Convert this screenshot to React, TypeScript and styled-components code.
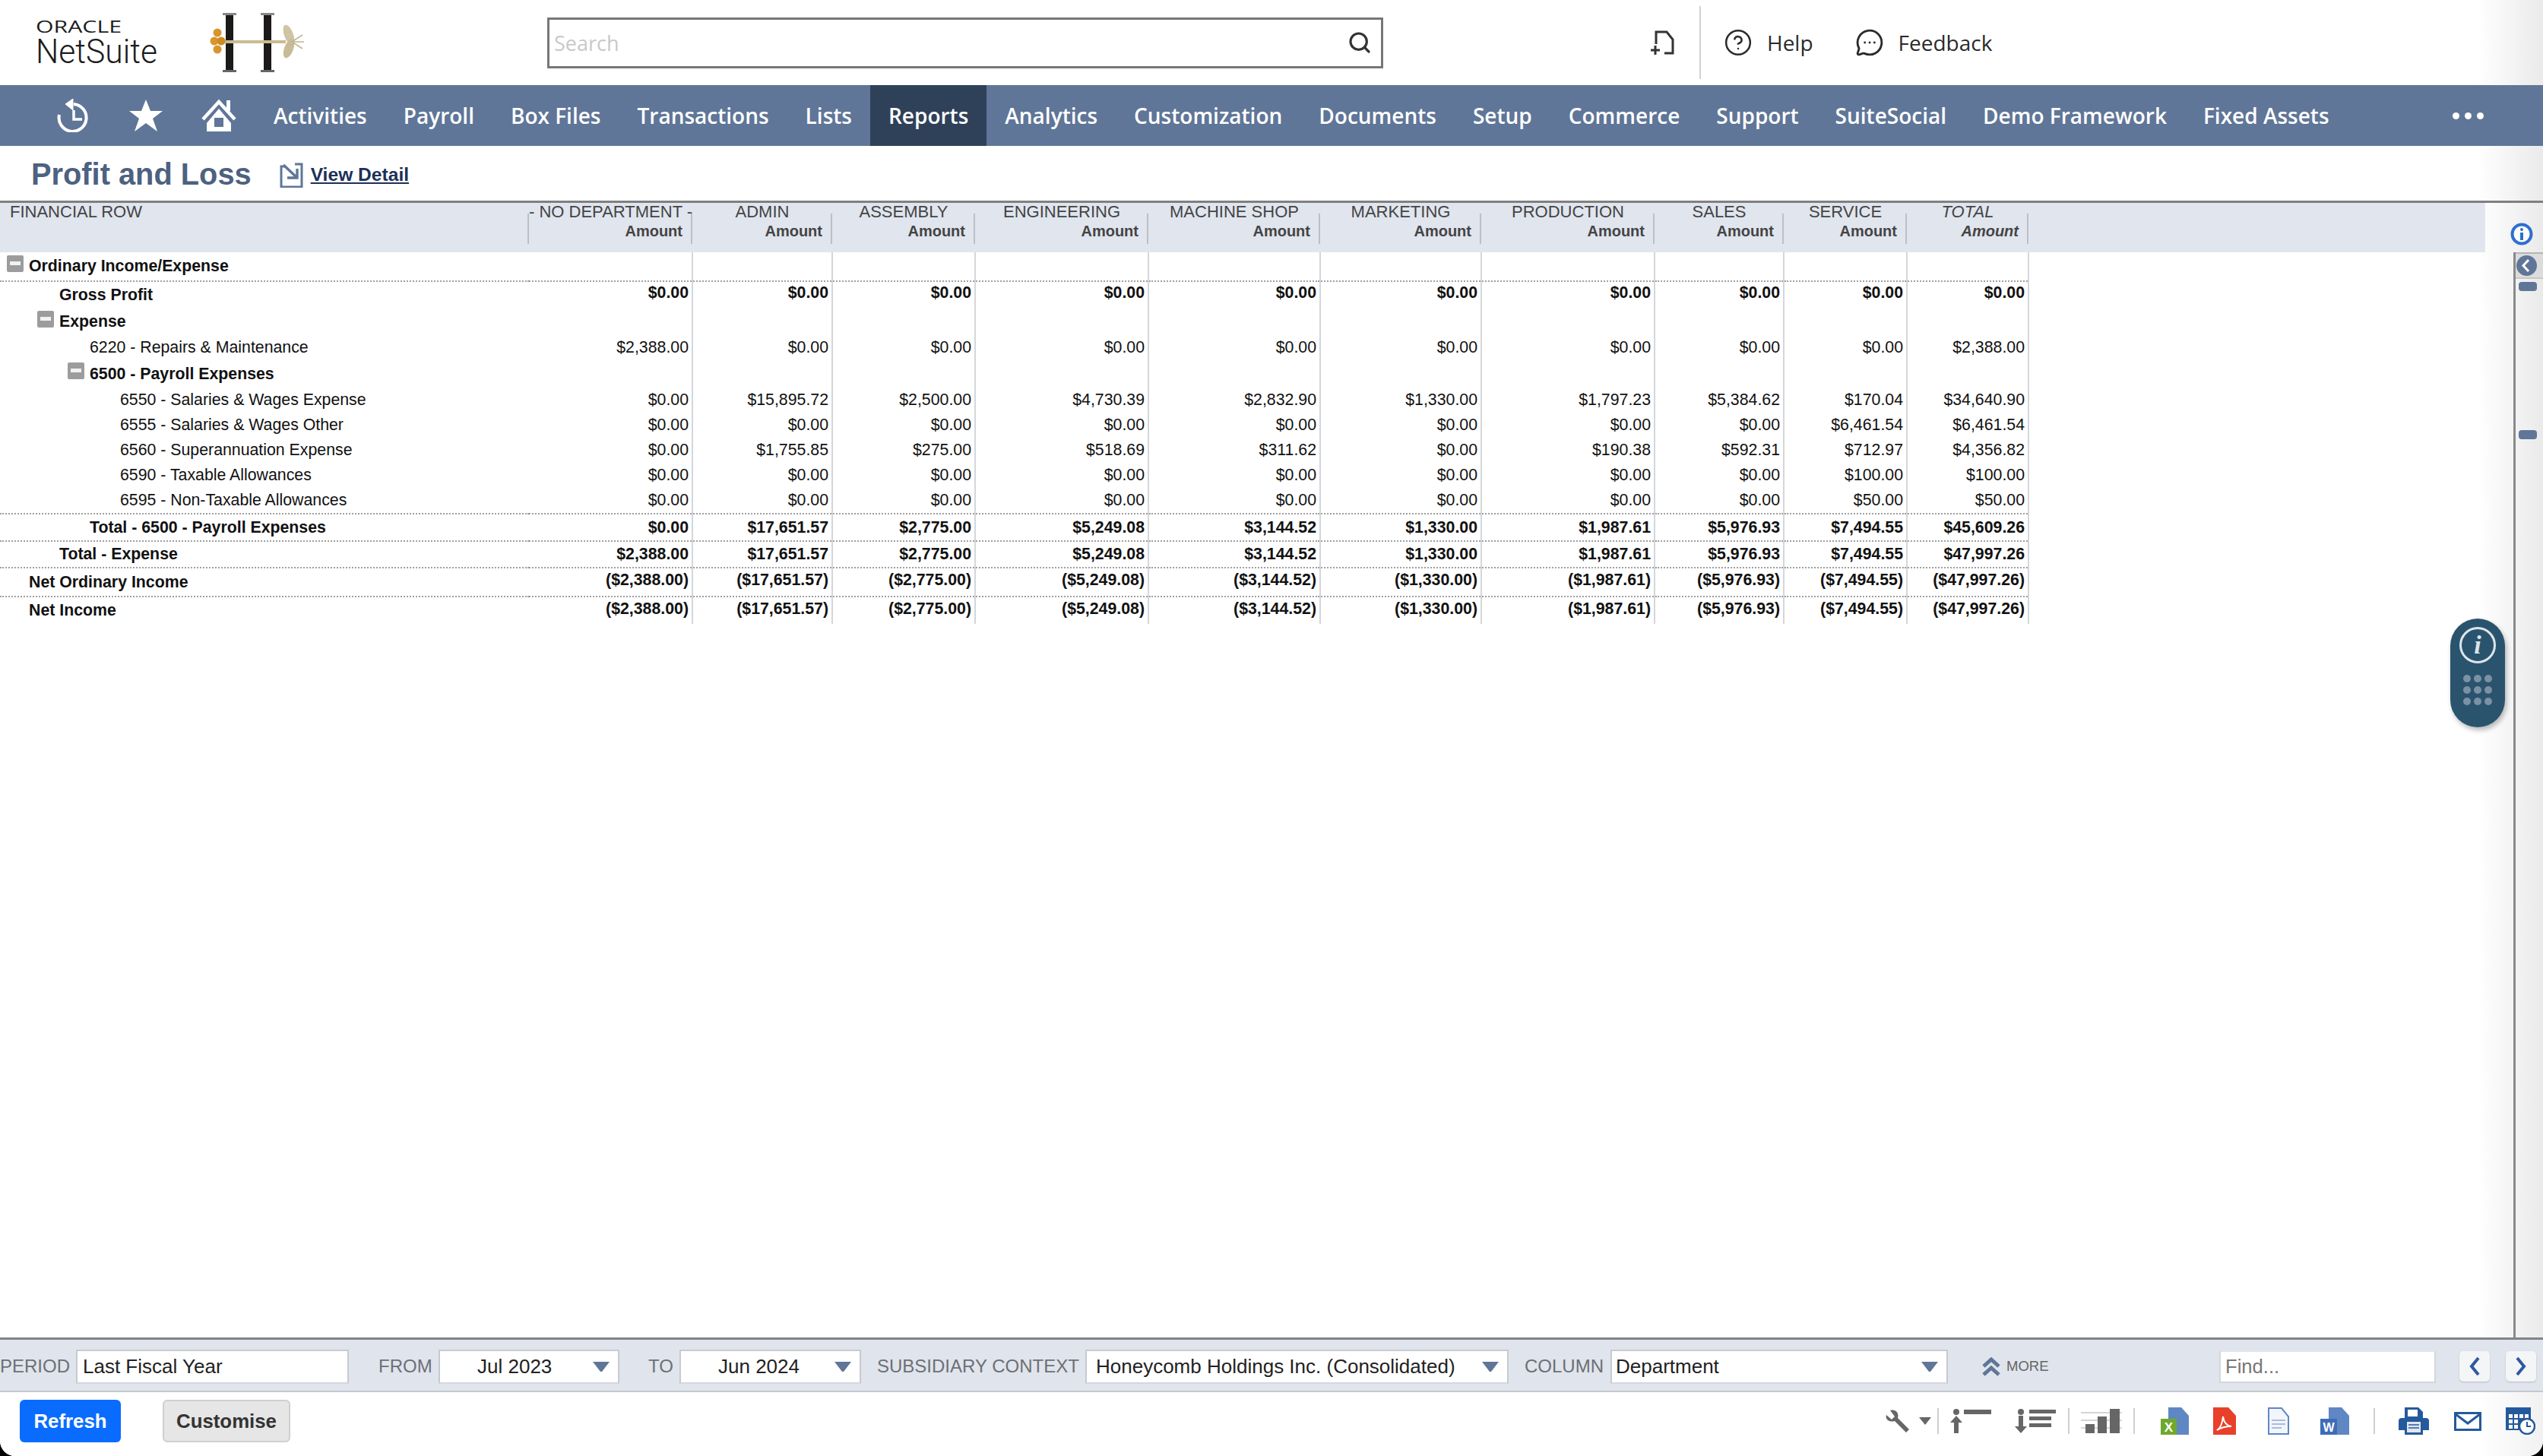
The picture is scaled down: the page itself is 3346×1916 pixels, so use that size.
import styled, { createGlobalStyle, css } from 'styled-components'
import { CircleHelp, MessageCircleMore, Search } from 'lucide-react'

const COLS = [696, 215, 184, 188, 228, 226, 212, 228, 170, 162, 160, 601]
const DEPTS = ['- NO DEPARTMENT -', 'ADMIN', 'ASSEMBLY', 'ENGINEERING', 'MACHINE SHOP', 'MARKETING', 'PRODUCTION', 'SALES', 'SERVICE', 'TOTAL']
const NAV = ['Activities', 'Payroll', 'Box Files', 'Transactions', 'Lists', 'Reports', 'Analytics', 'Customization', 'Documents', 'Setup', 'Commerce', 'Support', 'SuiteSocial', 'Demo Framework', 'Fixed Assets']

const Z = '$0.00'
const EMPTY = ['', '', '', '', '', '', '', '', '', '']

interface IRow {
  label: string
  level: number
  height: number
  bold?: boolean
  toggle?: boolean
  line?: boolean
  lift?: number
  values: string[]
}

const totals = ['$17,651.57', '$2,775.00', '$5,249.08', '$3,144.52', '$1,330.00', '$1,987.61', '$5,976.93', '$7,494.55']
const negatives = ['($2,388.00)', '($17,651.57)', '($2,775.00)', '($5,249.08)', '($3,144.52)', '($1,330.00)', '($1,987.61)', '($5,976.93)', '($7,494.55)', '($47,997.26)']

const ROWS: IRow[] = [
  { label: 'Ordinary Income/Expense', level: 0, height: 38, bold: true, toggle: true, line: true, values: EMPTY },
  { label: 'Gross Profit', level: 1, height: 36, bold: true, lift: 7, values: [Z, Z, Z, Z, Z, Z, Z, Z, Z, Z] },
  { label: 'Expense', level: 1, height: 35, bold: true, toggle: true, values: EMPTY },
  { label: '6220 - Repairs & Maintenance', level: 2, height: 33, values: ['$2,388.00', Z, Z, Z, Z, Z, Z, Z, Z, '$2,388.00'] },
  { label: '6500 - Payroll Expenses', level: 2, height: 36, bold: true, toggle: true, values: EMPTY },
  { label: '6550 - Salaries & Wages Expense', level: 3, height: 33, values: [Z, '$15,895.72', '$2,500.00', '$4,730.39', '$2,832.90', '$1,330.00', '$1,797.23', '$5,384.62', '$170.04', '$34,640.90'] },
  { label: '6555 - Salaries & Wages Other', level: 3, height: 33, values: [Z, Z, Z, Z, Z, Z, Z, Z, '$6,461.54', '$6,461.54'] },
  { label: '6560 - Superannuation Expense', level: 3, height: 33, values: [Z, '$1,755.85', '$275.00', '$518.69', '$311.62', Z, '$190.38', '$592.31', '$712.97', '$4,356.82'] },
  { label: '6590 - Taxable Allowances', level: 3, height: 33, values: [Z, Z, Z, Z, Z, Z, Z, Z, '$100.00', '$100.00'] },
  { label: '6595 - Non-Taxable Allowances', level: 3, height: 34, line: true, values: [Z, Z, Z, Z, Z, Z, Z, Z, '$50.00', '$50.00'] },
  { label: 'Total - 6500 - Payroll Expenses', level: 2, height: 36, bold: true, line: true, values: [Z, ...totals, '$45,609.26'] },
  { label: 'Total - Expense', level: 1, height: 35, bold: true, line: true, values: ['$2,388.00', ...totals, '$47,997.26'] },
  { label: 'Net Ordinary Income', level: 0, height: 38, bold: true, line: true, lift: 5, values: negatives },
  { label: 'Net Income', level: 0, height: 36, bold: true, lift: 5, values: negatives },
]

const GlobalStyle = createGlobalStyle`
  html, body {
    margin: 0;
    padding: 0;
    background: #000;
  }
  * {
    box-sizing: border-box;
  }
`

const fade = css`
  background: linear-gradient(90deg, #fff 0, #fff calc(100% - 86px), #eaeaea 100%);
`

const Page = styled.div`
  position: relative;
  display: flex;
  flex-direction: column;
  width: 3346px;
  height: 1916px;
  overflow: hidden;
  background: #fff;
  border-radius: 0 0 20px 20px;
  font-family: 'Liberation Sans', Arial, sans-serif;
  color: #111;
`

const TopBar = styled.header`
  ${fade}
  display: flex;
  align-items: center;
  flex: 0 0 112px;
  padding-left: 47px;
`

const Logo = styled.svg`
  width: 170px;
  height: 84px;
  flex: none;
`

const Brand = styled.svg`
  width: 126px;
  height: 78px;
  margin-left: 57px;
  flex: none;
`

const SearchBox = styled.div`
  display: flex;
  align-items: center;
  justify-content: space-between;
  width: 1100px;
  height: 67px;
  margin-left: 320px;
  padding: 0 12px 0 6px;
  border: 3px solid #777;
  color: #c9c9c9;
  font-family: 'Open Sans', sans-serif;
  font-size: 27px;
  svg {
    color: #333;
  }
`

const AddPage = styled.svg`
  width: 31px;
  height: 32px;
  margin-left: 352px;
  flex: none;
`

const Divider = styled.div`
  width: 2px;
  height: 96px;
  margin: 0 30px 0 33px;
  background: #d2d2d2;
`

const HeadLink = styled.div<{ $gap: number }>`
  display: flex;
  align-items: center;
  gap: 19px;
  margin-right: ${(p) => p.$gap}px;
  font-family: 'Open Sans', sans-serif;
  font-size: 28px;
  font-weight: 500;
  color: #2b2b2b;
`

const Nav = styled.nav`
  display: flex;
  align-items: stretch;
  flex: 0 0 80px;
  padding-left: 48px;
  background: #5f7698;
`

const NavIcon = styled.div`
  display: flex;
  align-items: center;
  justify-content: center;
  width: 96px;
`

const NavItem = styled.a<{ $active?: boolean }>`
  display: flex;
  align-items: center;
  padding: 0 24px;
  font-family: 'Open Sans', sans-serif;
  font-size: 28px;
  font-weight: 600;
  color: #fff;
  white-space: nowrap;
  ${(p) => p.$active && 'background: #2f4159;'}
`

const MoreDots = styled.div`
  display: flex;
  align-items: center;
  gap: 7px;
  margin: 0 78px 0 auto;
  span {
    width: 9px;
    height: 9px;
    border-radius: 50%;
    background: #fff;
  }
`

const TitleRow = styled.div`
  ${fade}
  display: flex;
  align-items: center;
  flex: 0 0 72px;
  padding-left: 41px;
`

const Title = styled.h1`
  margin: 2px 0 0;
  font-size: 39.8px;
  font-weight: 700;
  color: #4d6180;
`

const DetailIcon = styled.svg`
  width: 33px;
  height: 33px;
  margin: 4px 8px 0 37px;
`

const DetailLink = styled.a`
  margin-top: 4px;
  font-size: 24.6px;
  font-weight: 700;
  color: #1c3157;
  text-decoration: underline;
`

const Content = styled.main`
  ${fade}
  display: flex;
  flex: 1;
  min-height: 0;
  border-top: 3px solid #7f7f7f;
`

const TableArea = styled.div`
  width: 3270px;
  flex: none;
`

const Report = styled.table`
  width: 3270px;
  table-layout: fixed;
  border-collapse: collapse;
`

const HeadCell = styled.th<{ $italic?: boolean }>`
  position: relative;
  height: 65px;
  padding: 0;
  vertical-align: top;
  background: #e0e5ee;
  font-weight: 400;
  color: #444;
  ${(p) => p.$italic && 'font-style: italic;'}
  &::after {
    content: '';
    position: absolute;
    top: 14px;
    right: 0;
    width: 2px;
    height: 40px;
    background: #bcc0c6;
  }
`

const FirstHead = styled.th`
  position: relative;
  height: 65px;
  padding: 0 0 0 13px;
  vertical-align: top;
  text-align: left;
  background: #e0e5ee;
  font-weight: 400;
  font-size: 22px;
  line-height: 24px;
  color: #444;
  &::after {
    content: '';
    position: absolute;
    top: 14px;
    right: 0;
    width: 2px;
    height: 40px;
    background: #bcc0c6;
  }
`

const FillHead = styled.th`
  background: #e0e5ee;
`

const HeadTitle = styled.div`
  font-size: 22px;
  line-height: 24px;
  text-align: center;
  white-space: nowrap;
`

const HeadSub = styled.div`
  padding-right: 13px;
  font-size: 20px;
  line-height: 26px;
  font-weight: 700;
  text-align: right;
`

const RowLine = styled.tr<{ $line?: boolean }>`
  td {
    ${(p) => p.$line && 'border-bottom: 2px dotted #a0a0a0;'}
  }
`

const LabelCell = styled.td<{ $level: number; $bold?: boolean }>`
  padding: 0 0 0 ${(p) => 38 + p.$level * 40}px;
  font-size: 21.3px;
  font-weight: ${(p) => (p.$bold ? 700 : 400)};
  white-space: nowrap;
`

const LabelInner = styled.div`
  display: flex;
  align-items: center;
`

const Toggle = styled.span`
  position: relative;
  flex: none;
  width: 22px;
  height: 22px;
  margin: 0 7px 8px -29px;
  border-radius: 2px;
  background: #9c9c9c;
  &::after {
    content: '';
    position: absolute;
    left: 4px;
    top: 8px;
    width: 14px;
    height: 5px;
    background: #f2f2f2;
  }
`

const ValueCell = styled.td<{ $bold?: boolean; $lift?: number }>`
  padding: 0 4px ${(p) => p.$lift ?? 0}px 0;
  border-right: 2px solid #d4d6da;
  font-size: 21.3px;
  font-weight: ${(p) => (p.$bold ? 700 : 400)};
  text-align: right;
  white-space: nowrap;
`

const PlainCell = styled.td`
  && {
    border: 0;
  }
`

const Side = styled.aside`
  position: relative;
  display: flex;
  flex-direction: column;
  align-items: flex-end;
  flex: 1;
  padding-top: 26px;
`

const InfoMark = styled.svg`
  width: 30px;
  height: 30px;
  margin-right: 13px;
`

const Rail = styled.div`
  flex: 1;
  width: 39px;
  margin-top: 9px;
  border-left: 3px solid #8a8a8a;
`

const RailBack = styled.div`
  display: flex;
  align-items: center;
  padding-left: 1px;
  height: 35px;
  background: #dcdcdc;
  border-top: 2px solid #b5b5b5;
  border-bottom: 2px solid #c8c8c8;
`

const RailPill = styled.div<{ $top: number }>`
  width: 24px;
  height: 12px;
  margin: ${(p) => p.$top}px 0 0 4px;
  border-radius: 4px;
  background: #5f7698;
`

const Widget = styled.div`
  position: absolute;
  left: 3224px;
  top: 814px;
  display: flex;
  flex-direction: column;
  align-items: center;
  width: 72px;
  height: 143px;
  padding-top: 11px;
  border-radius: 36px;
  background: #2a546e;
  box-shadow: 2px 4px 6px rgba(0, 0, 0, 0.28);
`

const WidgetRing = styled.div`
  display: flex;
  align-items: center;
  justify-content: center;
  width: 48px;
  height: 48px;
  border: 3px solid #dde6ea;
  border-radius: 50%;
  color: #dde6ea;
  font-family: 'Liberation Serif', serif;
  font-style: italic;
  font-weight: 700;
  font-size: 34px;
`

const WidgetDots = styled.div`
  display: grid;
  grid-template-columns: repeat(3, 10px);
  gap: 5px 4px;
  margin-top: 15px;
  span {
    width: 10px;
    height: 10px;
    border-radius: 50%;
    background: #7c91a4;
  }
`

const FilterBar = styled.div`
  display: flex;
  align-items: center;
  flex: 0 0 72px;
  border-top: 3px solid #808488;
  border-bottom: 2px solid #c5c8cc;
  background: #e0e4ec;
  font-size: 24px;
  padding-top: 3px;
`

const FilterLabel = styled.span<{ $w: number; $ml: number }>`
  flex: none;
  width: ${(p) => p.$w}px;
  margin: 0 9px 0 ${(p) => p.$ml}px;
  color: #6c7076;
  white-space: nowrap;
`

const Field = styled.div<{ $w: number; $pl: number }>`
  display: flex;
  align-items: center;
  justify-content: space-between;
  flex: none;
  width: ${(p) => p.$w}px;
  height: 45px;
  padding: 0 10px 0 ${(p) => p.$pl}px;
  background: #fff;
  border: 2px solid #c7cad0;
  border-bottom-color: #d4d7dc;
  font-size: 26px;
  color: #222;
  white-space: nowrap;
`

const Caret = styled.svg`
  width: 24px;
  height: 15px;
  flex: none;
`

const MoreToggle = styled.div`
  display: flex;
  align-items: center;
  gap: 8px;
  width: 88px;
  margin-left: 45px;
  font-size: 18.5px;
  color: #666;
`

const FindBox = styled.div`
  display: flex;
  align-items: center;
  width: 285px;
  height: 43px;
  margin-left: 224px;
  padding-left: 6px;
  background: #fff;
  border: 2px solid #d4d6da;
  border-top-color: #e0e4ec;
  font-size: 25.6px;
  color: #777;
`

const PageBtn = styled.div<{ $ml: number }>`
  display: flex;
  align-items: center;
  justify-content: center;
  width: 40px;
  height: 40px;
  margin-left: ${(p) => p.$ml}px;
  border-radius: 5px;
  background: #f4f5f7;
  box-shadow: 0 1px 2px rgba(0, 0, 0, 0.18);
`

const ActionBar = styled.footer`
  display: flex;
  align-items: center;
  flex: 0 0 84px;
  padding: 0 0 8px 26px;
  background: linear-gradient(90deg, #fff 0, #fff calc(100% - 86px), #f1f1f1 100%);
`

const Button = styled.button<{ $primary?: boolean }>`
  height: 56px;
  padding: 0;
  border-radius: 6px;
  font-family: 'Liberation Sans', Arial, sans-serif;
  font-size: 25.8px;
  font-weight: 700;
  ${(p) =>
    p.$primary
      ? 'width: 133px; color: #fff; background: #0a6cff; border: 0;'
      : 'width: 168px; margin-left: 55px; color: #333; background: #e6e6e6; border: 2px solid #cfcfcf;'}
`

const Tools = styled.div`
  display: flex;
  align-items: center;
  margin-left: 2098px;
`

const Tool = styled.svg<{ $w: number; $h: number; $ml: number }>`
  flex: none;
  width: ${(p) => p.$w}px;
  height: ${(p) => p.$h}px;
  margin-left: ${(p) => p.$ml}px;
`

const ToolSep = styled.div<{ $ml: number }>`
  flex: none;
  width: 2px;
  height: 34px;
  margin-left: ${(p) => p.$ml}px;
  background: #cfcfcf;
`

const CaretIcon = () => (
  <Caret viewBox="0 0 24 15">
    <path d="M1 1h22L13 14h-2z" fill="#5f7698" />
  </Caret>
)

const Doc = ({ fill, stroke }: { fill: string; stroke?: string }) => (
  <path d="M8 1h17l9 11v23H8z" fill={fill} stroke={stroke} strokeWidth={stroke ? 2 : 0} />
)

const App = () => {
  return (
    <>
      <GlobalStyle />
      <Page>
        <TopBar>
          <Logo viewBox="0 -12 170 84">
            <text x="0" y="17" fontFamily="'Open Sans', sans-serif" fontSize="21" fill="#1c1c1c" textLength="113" lengthAdjust="spacingAndGlyphs">ORACLE</text>
            <text x="0" y="57" fontFamily="Roboto, sans-serif" fontWeight="300" fontSize="44" fill="#1c1c1c" textLength="160" lengthAdjust="spacingAndGlyphs">NetSuite</text>
          </Logo>
          <Brand viewBox="0 0 126 78">
            <rect x="23" y="0" width="10" height="78" fill="#1c1a18" />
            <rect x="73" y="0" width="10" height="78" fill="#1c1a18" />
            <rect x="19" y="0" width="18" height="3" fill="#888" />
            <rect x="69" y="0" width="18" height="3" fill="#888" />
            <rect x="19" y="75" width="18" height="3" fill="#666" />
            <rect x="69" y="75" width="18" height="3" fill="#666" />
            <rect x="18" y="36" width="84" height="4" fill="#c9bb8f" />
            <circle cx="12" cy="26" r="5.5" fill="#d9952c" />
            <circle cx="8" cy="37" r="5.5" fill="#d9952c" />
            <circle cx="17" cy="37" r="5.5" fill="#cf8a22" />
            <circle cx="12" cy="48" r="5.5" fill="#d9952c" />
            <ellipse cx="106" cy="29" rx="6" ry="14" fill="#cfc5a4" transform="rotate(-20 106 29)" />
            <ellipse cx="106" cy="47" rx="6" ry="13" fill="#c8bc98" transform="rotate(20 106 47)" />
            <path d="M110 38l14-9M110 38l16 0M110 38l14 9" stroke="#c2b591" strokeWidth="1.5" />
          </Brand>
          <SearchBox>
            Search
            <Search size={32} strokeWidth={2.4} />
          </SearchBox>
          <AddPage viewBox="0 0 31 32" fill="none" stroke="#333" strokeWidth="3">
            <path d="M7 18V2h14l8 10v18H18" />
            <path d="M6 20v12M0 26h12" />
          </AddPage>
          <Divider />
          <HeadLink $gap={55}>
            <CircleHelp size={38} strokeWidth={1.6} />
            Help
          </HeadLink>
          <HeadLink $gap={0}>
            <MessageCircleMore size={38} strokeWidth={1.8} />
            Feedback
          </HeadLink>
        </TopBar>
        <Nav>
          <NavIcon>
            <svg width="42" height="44" viewBox="0 0 42 44" fill="none" stroke="#fff" strokeWidth="4">
              <path d="M22 7a18 18 0 1 1-19 14" />
              <path d="M21 0v15L11 7z" fill="#fff" strokeWidth="1" />
              <path d="M22 15v12h11" strokeWidth="3.5" />
            </svg>
          </NavIcon>
          <NavIcon>
            <svg width="44" height="42" viewBox="0 0 44 42">
              <path d="M22 0l6 15h16L31 25l6 17-15-11-15 11 6-17L0 15h16z" fill="#fff" />
            </svg>
          </NavIcon>
          <NavIcon>
            <svg width="46" height="42" viewBox="0 0 46 42">
              <path d="M2 26L23 3l21 23" fill="none" stroke="#fff" strokeWidth="4.5" />
              <rect x="33" y="1" width="5" height="14" fill="#fff" />
              <path d="M7 31l16-19 16 19v11H7z" fill="#fff" />
              <rect x="17" y="24" width="12" height="12" fill="#5f7698" />
            </svg>
          </NavIcon>
          {NAV.map((item) => (
            <NavItem key={item} $active={item === 'Reports'}>
              {item}
            </NavItem>
          ))}
          <MoreDots>
            <span />
            <span />
            <span />
          </MoreDots>
        </Nav>
        <TitleRow>
          <Title>Profit and Loss</Title>
          <DetailIcon viewBox="0 0 33 33" fill="none" stroke="#5f7698" strokeWidth="3">
            <path d="M8 5H2v27h27V2h-9" />
            <path d="M5 3l18 17M23 8v12H10" strokeWidth="3.4" />
          </DetailIcon>
          <DetailLink>View Detail</DetailLink>
        </TitleRow>
        <Content>
          <TableArea>
            <Report>
              <colgroup>
                {COLS.map((w, i) => (
                  <col key={i} style={{ width: w }} />
                ))}
              </colgroup>
              <thead>
                <tr>
                  <FirstHead>FINANCIAL ROW</FirstHead>
                  {DEPTS.map((d) => (
                    <HeadCell key={d} $italic={d === 'TOTAL'}>
                      <HeadTitle>{d}</HeadTitle>
                      <HeadSub>Amount</HeadSub>
                    </HeadCell>
                  ))}
                  <FillHead />
                </tr>
              </thead>
              <tbody>
                {ROWS.map((row) => (
                  <RowLine key={row.label} $line={row.line} style={{ height: row.height }}>
                    <LabelCell $level={row.level} $bold={row.bold}>
                      <LabelInner>
                        {row.toggle && <Toggle />}
                        {row.label}
                      </LabelInner>
                    </LabelCell>
                    {row.values.map((v, i) => (
                      <ValueCell key={i} $bold={row.bold} $lift={row.lift}>
                        {v}
                      </ValueCell>
                    ))}
                    <PlainCell />
                  </RowLine>
                ))}
              </tbody>
            </Report>
          </TableArea>
          <Side>
            <InfoMark viewBox="0 0 30 30">
              <circle cx="15" cy="15" r="12.5" fill="#fff" stroke="#2f6fcf" strokeWidth="4" />
              <circle cx="15" cy="9" r="2" fill="#2f6fcf" />
              <rect x="13" y="13" width="4" height="10" fill="#2f6fcf" />
            </InfoMark>
            <Rail>
              <RailBack>
                <svg width="27" height="27" viewBox="0 0 27 27">
                  <circle cx="13.5" cy="13.5" r="13.5" fill="#5f7698" />
                  <path d="M16 6l-7 7.5 7 7.5" fill="none" stroke="#fff" strokeWidth="3" />
                </svg>
              </RailBack>
              <RailPill $top={4} />
              <RailPill $top={183} />
            </Rail>
          </Side>
        </Content>
        <FilterBar>
          <FilterLabel $w={91} $ml={0}>PERIOD</FilterLabel>
          <Field $w={359} $pl={7}>Last Fiscal Year</Field>
          <FilterLabel $w={70} $ml={39}>FROM</FilterLabel>
          <Field $w={238} $pl={49}>Jul 2023<CaretIcon /></Field>
          <FilterLabel $w={32} $ml={38}>TO</FilterLabel>
          <Field $w={239} $pl={49}>Jun 2024<CaretIcon /></Field>
          <FilterLabel $w={265} $ml={21}>SUBSIDIARY CONTEXT</FilterLabel>
          <Field $w={557} $pl={12}>Honeycomb Holdings Inc. (Consolidated)<CaretIcon /></Field>
          <FilterLabel $w={104} $ml={21}>COLUMN</FilterLabel>
          <Field $w={444} $pl={5}>Department<CaretIcon /></Field>
          <MoreToggle>
            <svg width="24" height="25" viewBox="0 0 24 25" fill="none" stroke="#5f7698" strokeWidth="5">
              <path d="M2 12L12 3l10 9M2 23l10-9 10 9" />
            </svg>
            MORE
          </MoreToggle>
          <FindBox>Find...</FindBox>
          <PageBtn $ml={31}>
            <svg width="16" height="26" viewBox="0 0 16 26" fill="none" stroke="#2d5a9e" strokeWidth="4">
              <path d="M13 2L4 13l9 11" />
            </svg>
          </PageBtn>
          <PageBtn $ml={21}>
            <svg width="16" height="26" viewBox="0 0 16 26" fill="none" stroke="#2d5a9e" strokeWidth="4">
              <path d="M3 2l9 11-9 11" />
            </svg>
          </PageBtn>
        </FilterBar>
        <ActionBar>
          <Button $primary>Refresh</Button>
          <Button>Customise</Button>
          <Tools>
            <Tool $w={32} $h={30} $ml={0} viewBox="0 0 32 30">
              <path d="M2 7l7 6 4-4-6-8c7-2 12 3 10 10l15 15-4 4-15-15C6 17 0 13 2 7z" fill="#666" />
            </Tool>
            <Tool $w={16} $h={10} $ml={13} viewBox="0 0 16 10">
              <path d="M0 0h16L8 10z" fill="#666" />
            </Tool>
            <ToolSep $ml={8} />
            <Tool $w={56} $h={32} $ml={13} viewBox="0 0 56 32" fill="#666">
              <circle cx="10" cy="4" r="4" />
              <path d="M10 9l8 9h-5v14H7V18H2z" />
              <rect x="20" y="1" width="36" height="6" />
            </Tool>
            <Tool $w={55} $h={32} $ml={30} viewBox="0 0 55 32" fill="#666">
              <circle cx="9" cy="4" r="4" />
              <path d="M6 9h6v14h5l-8 9-8-9h5z" />
              <rect x="20" y="1" width="35" height="5" />
              <rect x="20" y="10" width="29" height="5" />
              <rect x="20" y="19" width="29" height="5" />
            </Tool>
            <ToolSep $ml={16} />
            <Tool $w={54} $h={32} $ml={15} viewBox="0 0 54 32">
              <path d="M0 5h54M0 15h54M0 25h54" stroke="#d5d5d5" strokeWidth="2" />
              <rect x="6" y="20" width="12" height="12" fill="#666" />
              <rect x="22" y="10" width="12" height="22" fill="#666" />
              <rect x="38" y="0" width="13" height="32" fill="#666" />
            </Tool>
            <ToolSep $ml={15} />
            <Tool $w={37} $h={36} $ml={34} viewBox="0 0 37 36">
              <path d="M10 0h17l10 11v25H10z" fill="#5f87c4" />
              <rect x="0" y="15" width="21" height="21" fill="#6fa92c" />
              <text x="10.5" y="32" fontSize="17" fontWeight="700" fill="#fff" textAnchor="middle">X</text>
            </Tool>
            <Tool $w={30} $h={36} $ml={32} viewBox="0 0 30 36">
              <path d="M0 0h20l10 11v25H0z" fill="#e8402a" />
              <path d="M5 30c4-2 7-8 8-18 1 8 4 12 11 13-7 0-13 1-19 5z" fill="none" stroke="#fff" strokeWidth="2" />
            </Tool>
            <Tool $w={28} $h={36} $ml={42} viewBox="7 0 28 36">
              <Doc fill="#f2f5fb" stroke="#5f87c4" />
              <path d="M12 17h18M12 22h18M12 27h13" stroke="#a9bddf" strokeWidth="2" />
            </Tool>
            <Tool $w={38} $h={36} $ml={41} viewBox="0 0 38 36">
              <path d="M11 0h17l10 11v25H11z" fill="#5f87c4" />
              <rect x="0" y="15" width="22" height="21" fill="#3f6db5" />
              <text x="11" y="32" fontSize="16" fontWeight="700" fill="#fff" textAnchor="middle">W</text>
            </Tool>
            <ToolSep $ml={32} />
            <Tool $w={40} $h={36} $ml={31} viewBox="0 0 40 36">
              <path d="M8 0h18l6 6v8h4a4 4 0 0 1 4 4v12h-8v6H8v-6H0V18a4 4 0 0 1 4-4h4z" fill="#245a9c" />
              <rect x="12" y="3" width="13" height="9" fill="#fff" />
              <rect x="11" y="19" width="18" height="14" fill="#dfe6f0" />
              <path d="M13 23h14M13 27h14" stroke="#245a9c" strokeWidth="1.6" />
            </Tool>
            <Tool $w={36} $h={25} $ml={33} viewBox="0 0 36 25" fill="none" stroke="#245a9c" strokeWidth="3">
              <rect x="1.5" y="1.5" width="33" height="22" />
              <path d="M2 3l16 12L34 3" />
            </Tool>
            <Tool $w={39} $h={36} $ml={32} viewBox="0 0 39 36">
              <rect x="0" y="0" width="33" height="30" fill="#245a9c" />
              <path d="M4 9h5v5H4zM11 9h5v5h-5zM18 9h5v5h-5zM25 9h5v5h-5zM4 16h5v5H4zM11 16h5v5h-5zM4 23h5v5H4zM11 23h5v5h-5z" fill="#fff" />
              <circle cx="28" cy="25" r="10" fill="#fff" stroke="#245a9c" strokeWidth="2.4" />
              <path d="M28 19v6h5" fill="none" stroke="#245a9c" strokeWidth="2" />
            </Tool>
          </Tools>
        </ActionBar>
        <Widget>
          <WidgetRing>i</WidgetRing>
          <WidgetDots>
            {Array.from({ length: 9 }, (_, i) => (
              <span key={i} />
            ))}
          </WidgetDots>
        </Widget>
      </Page>
    </>
  )
}

export default App
